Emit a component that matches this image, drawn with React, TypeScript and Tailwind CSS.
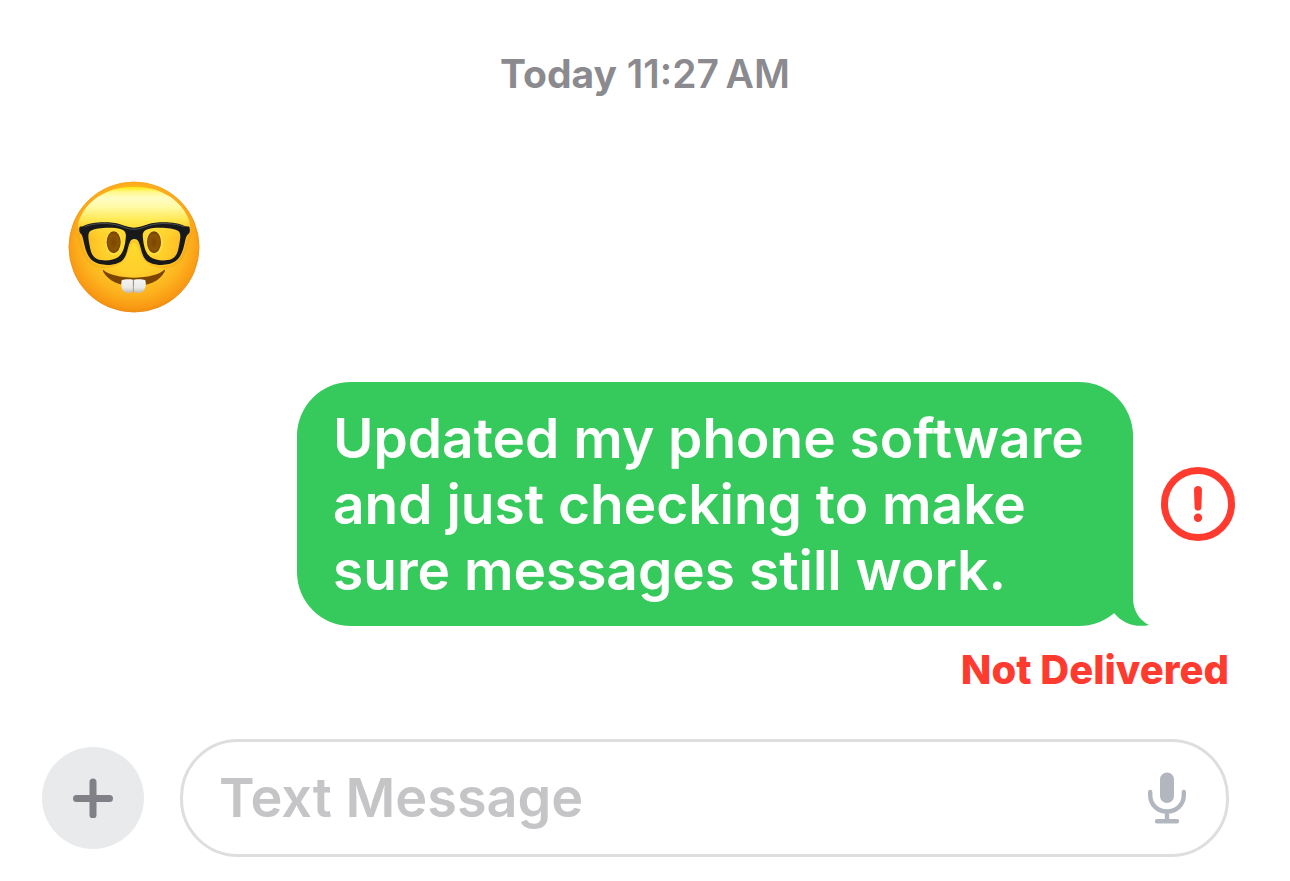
interface IMessageBubbleProps {
  text: string;
}

const NerdFaceEmoji = () => {
  return (
    <svg role="img" aria-label="Nerd face" viewBox="54 47 396 396" className="size-[132px]">
      <defs>
        <radialGradient id="face" cx="252" cy="225" r="222" gradientUnits="userSpaceOnUse">
          <stop offset="0" stopColor="#ffdc2c" />
          <stop offset="0.45" stopColor="#ffce2b" />
          <stop offset="0.72" stopColor="#fdb41f" />
          <stop offset="0.9" stopColor="#f99b14" />
          <stop offset="1" stopColor="#f0880c" />
        </radialGradient>
        <linearGradient id="rim" x1="0" y1="48" x2="0" y2="441" gradientUnits="userSpaceOnUse">
          <stop offset="0" stopColor="#f9a81a" />
          <stop offset="0.3" stopColor="#f3961a" />
          <stop offset="1" stopColor="#e98c18" />
        </linearGradient>
        <linearGradient id="shine" x1="0" y1="64" x2="0" y2="220" gradientUnits="userSpaceOnUse">
          <stop offset="0" stopColor="#ffe800" />
          <stop offset="0.1" stopColor="#fff88a" />
          <stop offset="0.22" stopColor="#fffcc4" />
          <stop offset="0.4" stopColor="#fffaa2" />
          <stop offset="0.65" stopColor="#ffee58" stopOpacity="0.85" />
          <stop offset="1" stopColor="#ffdc30" stopOpacity="0" />
        </linearGradient>
        <linearGradient id="teeth" x1="0" y1="342" x2="0" y2="384" gradientUnits="userSpaceOnUse">
          <stop offset="0" stopColor="#f4f4f2" />
          <stop offset="0.6" stopColor="#e9e9e8" />
          <stop offset="1" stopColor="#b9b6b2" />
        </linearGradient>
        <radialGradient id="eye">
          <stop offset="0" stopColor="#7a4700" />
          <stop offset="0.7" stopColor="#8b5503" />
          <stop offset="1" stopColor="#6f3f00" />
        </radialGradient>
      </defs>

      <circle cx="252" cy="245" r="195" fill="url(#face)" stroke="url(#rim)" strokeWidth="3" />
      <path d="M252 64C336 64 398 108 418 168C424 190 414 220 380 220H124C90 220 80 190 86 168C106 108 168 64 252 64Z" fill="url(#shine)" />

      {/* Frame shadow */}
      <path
        d="M84 204C90 240 102 276 124 294C146 312 204 308 222 278C234 258 236 228 252 228C268 228 270 258 282 278C300 308 358 312 380 294C402 276 414 240 420 204"
        fill="none"
        stroke="#e79a12"
        strokeOpacity="0.3"
        strokeWidth="7"
      />

      <ellipse cx="192" cy="232" rx="26" ry="37" fill="#ffe545" opacity="0.7" />
      <ellipse cx="313" cy="232" rx="26" ry="37" fill="#ffe545" opacity="0.7" />
      <ellipse cx="191" cy="231" rx="21" ry="33" fill="url(#eye)" />
      <ellipse cx="312" cy="231" rx="21" ry="33" fill="url(#eye)" />

      {/* Glasses */}
      <path
        fillRule="evenodd"
        fill="#17191a"
        d="M88 188C88 183 94 184 99 183C122 170 178 167 210 177C226 182 237 187 252 187C267 187 278 182 294 177C326 167 382 170 405 183C410 184 418 182 419 188C420 195 420 202 415 206C410 210 408 216 406 224C400 252 395 274 376 288C355 303 309 302 290 286C272 270 274 243 265 228C260 219 246 219 241 228C232 243 234 270 216 286C197 302 151 303 130 288C111 274 106 252 100 224C98 216 97 210 93 206C88 202 87 195 88 188Z
          M121 197C112 204 115 221 119 241C122 259 127 275 141 281C158 288 189 287 205 275C220 263 225 240 227 220C229 205 227 197 213 192C188 184 139 187 121 197Z
          M385 197C394 204 391 221 387 241C384 259 379 275 365 281C348 288 317 287 301 275C286 263 281 240 279 220C277 205 279 197 293 192C318 184 367 187 385 197Z"
      />
      <path
        d="M104 184C130 173 178 171 208 181C225 187 238 192 252 192C266 192 279 187 296 181C326 171 376 173 402 184"
        fill="none"
        stroke="#4b4e50"
        strokeWidth="3"
        strokeLinecap="round"
      />

      {/* Smile */}
      <path d="M160 314C176 328 212 337 252 337C292 337 327 328 342 314C345 312 346 315 344 319C329 347 295 362 252 362C209 362 176 347 160 320C158 315 158 312 160 314Z" fill="#7b4500" />
      <path d="M215 345C226 341 239 342 249 343V379C238 386 224 384 218 374C213 365 213 355 215 345Z" fill="url(#teeth)" />
      <path d="M252 343C263 342 276 341 286 345C289 355 288 366 282 374C275 384 263 386 252 379Z" fill="url(#teeth)" />
      <path d="M250 343V380" stroke="#aaa49c" strokeWidth="3" />
    </svg>
  );
};

const MessageBubble = ({ text }: IMessageBubbleProps) => {
  return (
    <div className="relative max-w-[836px] rounded-[54px] bg-[#36c95c] pl-9 pr-10 py-[23px]">
      <p className="font-semibold text-[55px] leading-[66px] text-white">{text}</p>

      <svg viewBox="0 0 40 60" className="absolute bottom-0 -right-4 w-10 h-[60px]" aria-hidden="true">
        <path d="M0 0H24V32C24 44 30 54 40 59C26 62 13 57 5 47L0 44Z" fill="#36c95c" />
      </svg>
    </div>
  );
};

const App = () => {
  return (
    <main className="flex flex-col min-h-screen bg-white font-['Inter',sans-serif]">
      <p className="pt-[51px] text-center font-semibold text-[39px] leading-[46px] text-[#8a8a8f]">
        <span className="font-bold">Today</span> 11:27{"\u202f"}AM
      </p>

      <div className="pt-[84px] pl-[68px]">
        <NerdFaceEmoji />
      </div>

      <div className="flex items-center justify-end gap-7 pt-[69px] pl-10 pr-[55px]">
        <MessageBubble text="Updated my phone software and just checking to make sure messages still work." />

        <button type="button" aria-label="Message not delivered" className="shrink-0 rounded-full">
          <svg viewBox="0 0 74 74" className="size-[74px]" aria-hidden="true">
            <circle cx="37" cy="37" r="33.5" fill="none" stroke="#ff3b30" strokeWidth="7" />
            <path d="M33 23C33 17.7 41 17.7 41 23L40.4 40.5C40.2 44.6 33.8 44.6 33.6 40.5Z" fill="#ff3b30" />
            <circle cx="37" cy="50.8" r="4.2" fill="#ff3b30" />
          </svg>
        </button>
      </div>

      <p className="pt-[22px] pr-[61px] text-right font-extrabold text-[40px] leading-[44px] text-[#ff3b30]">Not Delivered</p>

      <form className="flex items-center gap-9 mt-auto pb-6 pl-[42px] pr-[61px]">
        <button type="button" aria-label="Add attachment" className="flex items-center justify-center shrink-0 size-[102px] rounded-full bg-[#e9eaec]">
          <svg viewBox="0 0 40 40" className="size-10" aria-hidden="true">
            <path d="M20 4V37M3.5 20.5H36.5" stroke="#808086" strokeWidth="7" strokeLinecap="round" />
          </svg>
        </button>

        <div className="flex items-center grow min-w-0 h-[118px] pl-9 pr-10 rounded-[58px] border-3 border-[#dedede]">
          <input
            type="text"
            aria-label="Text Message"
            placeholder="Text Message"
            className="grow min-w-0 font-semibold text-[54px] leading-[66px] text-black placeholder:text-[#c5c5c7] outline-none"
          />

          <button type="button" aria-label="Dictate" className="shrink-0">
            <svg viewBox="0 0 38 52" className="w-[38px] h-[52px]" aria-hidden="true">
              <rect x="12" y="0.5" width="14" height="30.5" rx="7" fill="#b2b7bf" />
              <path d="M2.2 20V23C2.2 32.5 9.5 39.5 19 39.5C28.5 39.5 35.8 32.5 35.8 23V20M19 39.5V49M9 49.3H29" fill="none" stroke="#b2b7bf" strokeWidth="4.4" strokeLinecap="round" />
            </svg>
          </button>
        </div>
      </form>
    </main>
  );
};

export default App;
